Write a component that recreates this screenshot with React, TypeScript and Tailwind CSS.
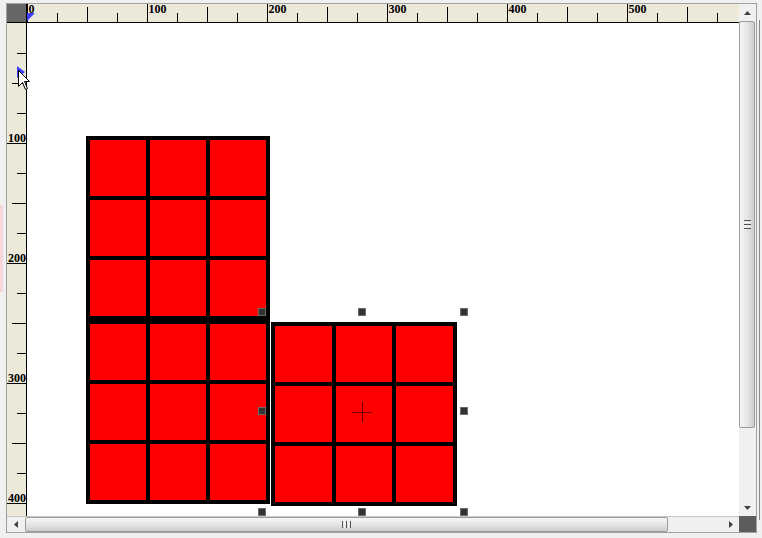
import React from 'react';

// ruler scale: 30px per 25 units, zero at the canvas origin
const TICKS_X = Array.from({ length: 24 }, (_, i) => i);
const TICKS_Y = Array.from({ length: 17 }, (_, i) => i).slice(1);
const RULER_FONT = '"Liberation Serif", "Times New Roman", serif';

function TopRuler() {
  return (
    <svg width={712} height={19} className="block overflow-visible">
      <rect x={0} y={0} width={712} height={19} fill="#ece9d8" />
      <rect x={0} y={18} width={712} height={1} fill="#000" />
      {TICKS_X.map((k) => {
        const x = k * 30 + 0.5;
        const y1 = k % 4 === 0 ? 0 : k % 2 === 0 ? 3 : 9;
        return <line key={k} x1={x} x2={x} y1={y1} y2={18} stroke="#000" strokeWidth={1} />;
      })}
      {TICKS_X.filter((k) => k % 4 === 0).map((k) => (
        <text key={k} x={k * 30 + 1.5} y={9} fontSize={12} fontWeight={700} fontFamily={RULER_FONT} fill="#000">
          {k * 25}
        </text>
      ))}
      <polygon points="0,9 8,9 0,17" fill="#3c3cff" />
    </svg>
  );
}

function LeftRuler() {
  return (
    <svg width={20} height={493} className="block">
      <rect x={0} y={0} width={20} height={493} fill="#ece9d8" />
      <rect x={19} y={0} width={1} height={493} fill="#000" />
      {TICKS_Y.map((k) => {
        const y = k * 30 + 0.5;
        const x1 = k % 4 === 0 ? 0 : k % 2 === 0 ? 5 : 10;
        return <line key={k} x1={x1} x2={19} y1={y} y2={y} stroke="#000" strokeWidth={1} />;
      })}
      {TICKS_Y.filter((k) => k % 4 === 0).map((k) => (
        <text key={k} x={1} y={k * 30 - 1} fontSize={12} fontWeight={700} fontFamily={RULER_FONT} fill="#000">
          {k * 25}
        </text>
      ))}
      <polygon points="10,43 10,55 18,49" fill="#3c3cff" />
    </svg>
  );
}

function Arrow({ dir }: { dir: 'up' | 'down' | 'left' | 'right' }) {
  const pts = {
    up: '0,4 7,4 3.5,0',
    down: '0,0 7,0 3.5,4',
    left: '4,0 4,7 0,3.5',
    right: '0,0 0,7 4,3.5',
  }[dir];
  const w = dir === 'up' || dir === 'down' ? 7 : 4;
  const h = dir === 'up' || dir === 'down' ? 4 : 7;
  return (
    <svg width={w} height={h} className="block">
      <polygon points={pts} fill="#404040" />
    </svg>
  );
}

function Block({ className, cols }: { className: string; cols: string }) {
  return (
    <div className={`absolute grid ${cols} grid-rows-[56px_56px_56px] gap-[4px] bg-black p-[4px] ${className}`}>
      {Array.from({ length: 9 }).map((_, i) => (
        <div key={i} className="bg-[#ff0000]" />
      ))}
    </div>
  );
}

const HANDLES = [
  'left-[231px] top-[285px]',
  'left-[331px] top-[285px]',
  'left-[433px] top-[285px]',
  'left-[231px] top-[384px]',
  'left-[433px] top-[384px]',
  'left-[231px] top-[485px]',
  'left-[331px] top-[485px]',
  'left-[433px] top-[485px]',
];

export default function App() {
  return (
    <div className="relative h-[538px] w-[762px] overflow-hidden bg-[#f0f0f0] pl-[6px] pt-[3px]">
      {/* window behind, peeking out on the left */}
      <div className="absolute left-0 top-[205px] h-[87px] w-[3px] bg-[#f6d6d6]" />
      <div className="absolute left-[759px] top-[20px] h-[500px] w-[1px] bg-[#8a8a8a]" />

      <div className="grid w-[751px] grid-cols-[20px_712px_17px] grid-rows-[19px_493px_16px] border border-[#a0a0a0] bg-[#f0f0f0]">
        {/* corner */}
        <div className="border-b border-r border-black bg-[#666666]" />
        <TopRuler />

        {/* vertical scrollbar */}
        <div className="row-span-2 flex flex-col bg-[#f0f0f0]">
          <div className="flex h-[17px] items-center justify-center">
            <Arrow dir="up" />
          </div>
          <div className="flex h-[407px] w-[16px] items-center justify-center rounded-[2px] border border-[#9c9c9c] bg-gradient-to-r from-[#f6f6f6] via-[#e6e6e6] to-[#cdcdcd]">
            <div className="flex flex-col gap-[1px]">
              <div className="h-[1px] w-[7px] bg-[#555]" />
              <div className="h-[1px] w-[7px] bg-[#f8f8f8]" />
              <div className="h-[1px] w-[7px] bg-[#555]" />
              <div className="h-[1px] w-[7px] bg-[#f8f8f8]" />
              <div className="h-[1px] w-[7px] bg-[#555]" />
            </div>
          </div>
          <div className="flex-1" />
          <div className="flex h-[17px] items-center justify-center">
            <Arrow dir="down" />
          </div>
        </div>

        <LeftRuler />

        {/* drawing canvas */}
        <div className="relative overflow-hidden bg-white">
          <Block className="left-[59px] top-[113px]" cols="grid-cols-[56px_56px_56px]" />
          <Block className="left-[59px] top-[297px]" cols="grid-cols-[56px_56px_56px]" />
          <Block className="left-[244px] top-[299px]" cols="grid-cols-[57px_56px_57px]" />

          {HANDLES.map((pos) => (
            <div key={pos} className={`absolute h-[8px] w-[8px] border border-[#6c6c6c] bg-[#333333] ${pos}`} />
          ))}

          {/* centre mark */}
          <div className="absolute left-[325px] top-[389px] h-[1px] w-[20px] bg-[#7a0000]" />
          <div className="absolute left-[335px] top-[379px] h-[20px] w-[1px] bg-[#7a0000]" />
        </div>

        {/* horizontal scrollbar */}
        <div className="col-span-2 flex items-center border-t border-[#c8c8c8] bg-[#f0f0f0]">
          <div className="flex h-full w-[17px] items-center justify-center">
            <Arrow dir="left" />
          </div>
          <div className="ml-[1px] flex h-[15px] w-[643px] items-center justify-center rounded-[2px] border border-[#9c9c9c] bg-gradient-to-b from-[#f6f6f6] via-[#e6e6e6] to-[#cdcdcd]">
            <div className="flex gap-[1px]">
              <div className="h-[7px] w-[1px] bg-[#555]" />
              <div className="h-[7px] w-[1px] bg-[#f8f8f8]" />
              <div className="h-[7px] w-[1px] bg-[#555]" />
              <div className="h-[7px] w-[1px] bg-[#f8f8f8]" />
              <div className="h-[7px] w-[1px] bg-[#555]" />
            </div>
          </div>
          <div className="flex-1" />
          <div className="flex h-full w-[17px] items-center justify-center">
            <Arrow dir="right" />
          </div>
        </div>
        <div className="bg-[#5c5c5c]" />
      </div>

      {/* mouse pointer over the left ruler */}
      <svg width={13} height={21} className="absolute left-[18px] top-[70px]">
        <path d="M0.5 0.5 L0.5 16.5 L4.5 12.5 L7.5 19.5 L9.5 18.5 L6.5 11.5 L11.5 11.5 Z" fill="#fff" stroke="#000" strokeWidth={1} />
      </svg>
    </div>
  );
}
